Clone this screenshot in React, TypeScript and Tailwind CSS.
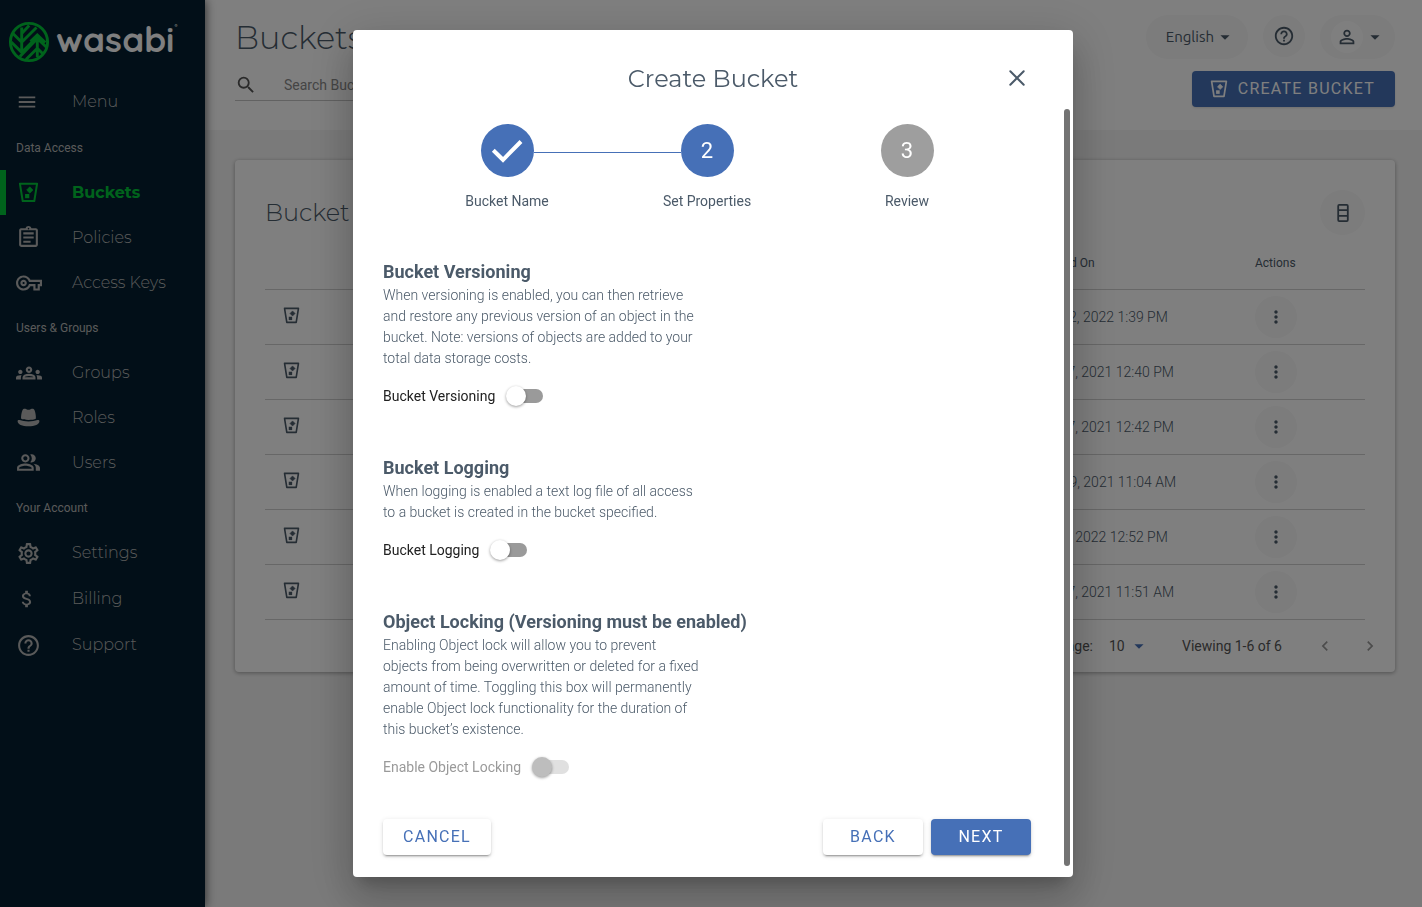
import type { ReactNode } from 'react';
import {
  MdArrowDropDown,
  MdAttachMoney,
  MdChevronLeft,
  MdChevronRight,
  MdHelpOutline,
  MdMenu,
  MdMoreVert,
  MdOutlineAssignment,
  MdOutlineGroups,
  MdOutlinePeopleAlt,
  MdOutlineSettings,
  MdOutlineVpnKey,
  MdPersonOutline,
  MdSearch,
} from 'react-icons/md';

function BucketIcon({ className }: { className: string }) {
  return (
    <svg viewBox="0 0 20 21" className={className} aria-hidden="true">
      <path d="M1.4 1.7h17.2L15.8 19H4.2z" fill="none" stroke="currentColor" strokeWidth="2" strokeLinejoin="round" />
      <path d="M11.300 4.8l3.2 3.2-3.2 3.2L8.100 8z" fill="currentColor" stroke="currentColor" strokeWidth="0.6" />
      <path d="M6.600 12h4.200v4.200H6.600z" fill="currentColor" />
    </svg>
  );
}

function HatIcon({ className }: { className: string }) {
  return (
    <svg viewBox="0 0 24 24" className={className} aria-hidden="true" fill="currentColor">
      <path d="M5 13.200c-.4-1.700.3-6.300 1.300-8.400.5-1 1.500-1.500 2.600-1.200 1 .3 2 1 3.100 1s2.100-.7 3.100-1c1.100-.3 2.100.2 2.600 1.200 1 2.100 1.700 6.700 1.300 8.400-1.200.8-3.900 1.100-7 1.100s-5.800-.3-7-1.100z" />
      <path d="M1.500 15.400c0-1 1-1.300 2-1 2.300.9 5.200 1.400 8.500 1.400s6.200-.5 8.500-1.400c1-.3 2 0 2 1 0 3.300-4.500 5.100-10.500 5.100s-10.500-1.800-10.500-5.100z" />
    </svg>
  );
}

function Logo() {
  return (
    <div className="flex h-[79px] items-center gap-[6px] pt-1 pl-2">
      <svg viewBox="0 0 42 42" className="size-[42px] shrink-0" aria-hidden="true" fill="none" stroke="#00c638" strokeWidth="2.900">
        <circle cx="21" cy="21" r="18.600" />
        <path d="M13.700 6.500V30M4.700 12.300l9 8.900L28.500 6.500M3.200 21l10.500 10.400L26.500 18.500M13.700 12.500l7.500-8" />
        <path d="M29.300 14v22M12 35.500l17.300-18 9.200 8.800M18 38.500l11.300-11.200 6 6M22.500 20.500l6.800-6.500 8 7.500" />
      </svg>
      <span className="flex items-start pb-[5px] font-[Quicksand,Comfortaa,Montserrat,sans-serif] text-[35px] leading-10 font-bold text-white">
        wasabi<sup className="text-[6px] leading-5">®</sup>
      </span>
    </div>
  );
}

function NavItem({ icon, label, active = false, tall = false }: { icon: ReactNode; label: string; active?: boolean; tall?: boolean }) {
  return (
    <a
      href="#"
      className={`flex items-center border-l-[6px] pl-[10px] font-[Montserrat,sans-serif] text-base ${tall ? 'h-[46px]' : 'h-[45px]'} ${
        active ? 'border-[#00c638] font-bold text-[#00c638]' : 'border-transparent font-light text-[#b4b4b4]'
      }`}
    >
      <span className="flex w-14 items-center">{icon}</span>
      {label}
    </a>
  );
}

function NavHeading({ children }: { children: string }) {
  return <h2 className="flex h-[45px] items-center pl-4 text-xs text-[#b4b4b4]">{children}</h2>;
}

function Sidebar() {
  return (
    <nav className="z-10 w-[205px] shrink-0 bg-[#041f30] shadow-[0_0_10px_rgba(0,0,0,0.7)]">
      <Logo />
      <NavItem tall icon={<MdMenu className="size-[22px]" />} label="Menu" />
      <NavHeading>Data Access</NavHeading>
      <NavItem active icon={<BucketIcon className="ml-[2px] size-[21px]" />} label="Buckets" />
      <NavItem icon={<MdOutlineAssignment className="size-[25px]" />} label="Policies" />
      <NavItem icon={<MdOutlineVpnKey className="size-[26px]" />} label="Access Keys" />
      <NavHeading>{'Users & Groups'}</NavHeading>
      <NavItem icon={<MdOutlineGroups className="size-[26px]" />} label="Groups" />
      <NavItem icon={<HatIcon className="size-[25px]" />} label="Roles" />
      <NavItem icon={<MdOutlinePeopleAlt className="size-[25px]" />} label="Users" />
      <NavHeading>Your Account</NavHeading>
      <NavItem tall icon={<MdOutlineSettings className="size-[25px]" />} label="Settings" />
      <NavItem tall icon={<MdAttachMoney className="size-[22px]" />} label="Billing" />
      <NavItem tall icon={<MdHelpOutline className="size-[25px]" />} label="Support" />
    </nav>
  );
}

function Header() {
  return (
    <header className="flex h-[130px] justify-between bg-white pr-[27px] pl-[30px]">
      <div className="w-[400px]">
        <h1 className="pt-4 font-[Montserrat,sans-serif] text-[32px] leading-[44px] font-light">Buckets</h1>
        <label className="mt-[9px] flex h-8 items-center border-b border-[#c4c4c4]">
          <MdSearch className="mr-[27px] size-[22px] shrink-0 text-[#555]" aria-hidden="true" />
          <input type="search" aria-label="Search Buckets" placeholder="Search Buckets" className="w-full text-sm outline-none placeholder:text-[#8a8a8a]" />
        </label>
      </div>
      <div className="flex flex-col items-end gap-3 pt-[15px]">
        <div className="flex items-start gap-[15px]">
          <button className="flex h-11 items-center rounded-full bg-[#f8f8f8] pr-3 pl-5 font-[Ubuntu,'Open_Sans',sans-serif] text-[15px]">
            English
            <MdArrowDropDown className="size-[22px]" />
          </button>
          <button aria-label="Help" className="flex size-[42px] items-center justify-center rounded-full bg-[#f8f8f8]">
            <MdHelpOutline className="size-[22px]" />
          </button>
          <button aria-label="Account" className="flex h-11 w-[75px] items-center rounded-full bg-[#f8f8f8] pl-[11px]">
            <span className="flex size-8 items-center justify-center rounded-full bg-white">
              <MdPersonOutline className="size-[22px]" />
            </span>
            <MdArrowDropDown className="ml-px size-[22px]" />
          </button>
        </div>
        <button className="flex h-9 items-center gap-[10px] rounded bg-[#4670b7] pr-5 pl-[18px] text-base tracking-[1.25px] text-white shadow-sm">
          <BucketIcon className="size-[18px]" />
          CREATE BUCKET
        </button>
      </div>
    </header>
  );
}

const buckets = [
  { name: 'archive', created: 'Jan 12, 2022 1:39 PM' },
  { name: 'backups', created: 'Oct 27, 2021 12:40 PM' },
  { name: 'documents', created: 'Oct 27, 2021 12:42 PM' },
  { name: 'media', created: 'Sep 29, 2021 11:04 AM' },
  { name: 'reports', created: 'Jan 5, 2022 12:52 PM' },
  { name: 'uploads', created: 'Oct 27, 2021 11:51 AM' },
];

function BucketList() {
  return (
    <section className="mt-[30px] mr-[27px] ml-[30px] rounded bg-white px-[30px] pt-[30px] shadow-[0_1px_4px_rgba(0,0,0,0.35)]">
      <div className="flex h-[45px] items-center justify-between">
        <h2 className="font-[Montserrat,sans-serif] text-2xl font-light">Bucket List</h2>
        <button aria-label="Columns" className="flex size-[45px] items-center justify-center rounded-full bg-[#f8f8f8]">
          <svg viewBox="0 0 12 18" className="h-[18px] w-3" fill="none" stroke="currentColor" strokeWidth="1.800" aria-hidden="true">
            <rect x="1.200" y="0.900" width="9.600" height="16.200" rx="1" />
            <path d="M1 6.200h10M1 11.800h10" />
          </svg>
        </button>
      </div>
      <table className="w-full table-fixed text-left">
        <thead>
          <tr className="h-[54px] border-b border-[#cfcfcf] text-xs">
            <th className="w-[485px]" aria-label="Type" />
            <th className="pt-[2px] font-normal">Name</th>
            <th className="w-[220px] pt-[2px] font-normal">Created On</th>
            <th className="w-[110px] pt-[2px] font-normal">Actions</th>
          </tr>
        </thead>
        <tbody>
          {buckets.map((b) => (
            <tr key={b.name} className="h-[55px] border-b border-[#cfcfcf] text-sm font-light">
              <td className="pb-[2px] pl-[18px]"><BucketIcon className="size-[17px]" /></td>
              <td>{b.name}</td>
              <td>{b.created}</td>
              <td>
                <button aria-label={`Actions for ${b.name}`} className="flex size-[42px] items-center justify-center rounded-full bg-[#f8f8f8]">
                  <MdMoreVert className="size-5" />
                </button>
              </td>
            </tr>
          ))}
        </tbody>
      </table>
      <div className="flex h-[52px] items-center justify-end text-sm text-[#555]">
        <label htmlFor="rows" className="mr-4">Rows per page:</label>
        <span className="flex items-center">
          <select id="rows" defaultValue="10" className="w-[22px] appearance-none">
            <option>10</option>
            <option>25</option>
          </select>
          <MdArrowDropDown className="-ml-[3px] size-[22px] text-[#4670b7]" aria-hidden="true" />
        </span>
        <span className="ml-8">Viewing 1-6 of 6</span>
        <button aria-label="Previous page" className="ml-[33px] text-[#999]"><MdChevronLeft className="size-5" /></button>
        <button aria-label="Next page" className="-mr-[15px] ml-[25px] text-[#999]"><MdChevronRight className="size-5" /></button>
      </div>
    </section>
  );
}

function Step({ badge, label, state, linked = false }: { badge: ReactNode; label: string; state: 'on' | 'off'; linked?: boolean }) {
  return (
    <li className="flex w-[200px] flex-col items-center">
      <div className="flex w-full items-center">
        <span className={`mt-[3px] h-px flex-1 ${state === 'on' && !linked ? 'bg-[#4670b7]' : 'bg-transparent'}`} />
        <span className={`flex size-[53px] items-center justify-center rounded-full text-[22px] text-white ${state === 'on' ? 'bg-[#4670b7]' : 'bg-[#9e9e9e]'}`}>
          {badge}
        </span>
        <span className={`mt-[3px] h-px flex-1 ${linked ? 'bg-[#4670b7]' : 'bg-transparent'}`} />
      </div>
      <span className="mt-[14px] text-sm leading-5">{label}</span>
    </li>
  );
}

function Property({ title, text, label, disabled = false }: { title: string; text: string; label: string; disabled?: boolean }) {
  return (
    <section>
      <h3 className="text-lg leading-[26px] font-bold">{title}</h3>
      <p className="max-w-80 text-sm leading-[21px] font-light">{text}</p>
      <label className={`mt-2 flex h-[38px] items-center text-sm ${disabled ? 'text-[#9a9a9a]' : 'text-[#212121]'}`}>
        {label}
        <input
          type="checkbox"
          role="switch"
          disabled={disabled}
          className="relative mx-[14px] h-[14px] w-[34px] appearance-none rounded-full bg-[#9a9a9a] before:absolute before:-top-[3px] before:-left-[3px] before:size-5 before:rounded-full before:bg-white before:shadow-[0_1px_3px_rgba(0,0,0,0.4)] checked:bg-[#4670b7] checked:before:left-[17px] disabled:bg-[#e0e0e0] disabled:before:bg-[#bdbdbd]"
        />
      </label>
    </section>
  );
}

const raised = 'shadow-[0_3px_1px_-2px_rgba(0,0,0,0.2),0_2px_2px_rgba(0,0,0,0.14),0_1px_5px_rgba(0,0,0,0.12)]';

function CreateBucketDialog() {
  return (
    <div className="fixed inset-0 z-20 flex items-center justify-center bg-black/50 py-[30px]">
      <div
        role="dialog"
        aria-modal="true"
        aria-labelledby="dialog-title"
        className="ml-1 flex w-full max-w-[720px] flex-col rounded bg-white text-[#4b5a69] shadow-[0_11px_15px_-7px_rgba(0,0,0,0.2),0_24px_38px_3px_rgba(0,0,0,0.14),0_9px_46px_8px_rgba(0,0,0,0.12)]"
      >
        <div className="grid h-[79px] shrink-0 grid-cols-[1fr_auto_1fr] items-center px-11 pt-4">
          <h2 id="dialog-title" className="col-start-2 pt-[2px] font-[Montserrat,sans-serif] text-2xl">Create Bucket</h2>
          <button aria-label="Close" className="flex size-6 items-center justify-center justify-self-end">
            <svg viewBox="0 0 16 16" className="size-4" fill="none" stroke="currentColor" strokeWidth="2" strokeLinecap="round" aria-hidden="true">
              <path d="M1.300 1.300l13.400 13.400M14.700 1.300L1.300 14.700" />
            </svg>
          </button>
        </div>
        <div className="flex">
          <div className="flex-1 pt-[15px] pr-[33px] pb-[22px] pl-[30px]">
            <ol className="flex justify-center">
              <Step
                state="on"
                linked
                label="Bucket Name"
                badge={
                  <svg viewBox="0 0 34 34" className="size-[34px]" fill="none" stroke="currentColor" strokeWidth="4" role="img" aria-label="Completed">
                    <path d="M3.300 16.300l9.700 9.500L31 7.500" />
                  </svg>
                }
              />
              <Step state="on" badge="2" label="Set Properties" />
              <Step state="off" badge="3" label="Review" />
            </ol>
            <div className="mt-12 flex flex-col gap-10">
              <Property
                title="Bucket Versioning"
                text="When versioning is enabled, you can then retrieve and restore any previous version of an object in the bucket. Note: versions of objects are added to your total data storage costs."
                label="Bucket Versioning"
              />
              <Property
                title="Bucket Logging"
                text="When logging is enabled a text log file of all access to a bucket is created in the bucket specified."
                label="Bucket Logging"
              />
              <Property
                disabled
                title="Object Locking (Versioning must be enabled)"
                text="Enabling Object lock will allow you to prevent objects from being overwritten or deleted for a fixed amount of time. Toggling this box will permanently enable Object lock functionality for the duration of this bucket’s existence."
                label="Enable Object Locking"
              />
            </div>
            <div className="mt-[33px] flex gap-2 text-base tracking-[1.25px] text-[#4670b7]">
              <button className={`mr-auto h-9 w-[108px] rounded bg-white ${raised}`}>CANCEL</button>
              <button className={`h-9 w-[100px] rounded bg-white ${raised}`}>BACK</button>
              <button className={`h-9 w-[100px] rounded bg-[#4670b7] text-white ${raised}`}>NEXT</button>
            </div>
          </div>
          <div className="mr-[3px] mb-[11px] w-[6px] rounded-full bg-[#737373]" />
        </div>
      </div>
    </div>
  );
}

export default function App() {
  return (
    <div className="flex min-h-screen bg-[#f5f5f5] font-[Roboto,sans-serif] text-[#4b5a69]">
      <Sidebar />
      <main className="min-w-0 flex-1">
        <Header />
        <BucketList />
      </main>
      <CreateBucketDialog />
    </div>
  );
}
